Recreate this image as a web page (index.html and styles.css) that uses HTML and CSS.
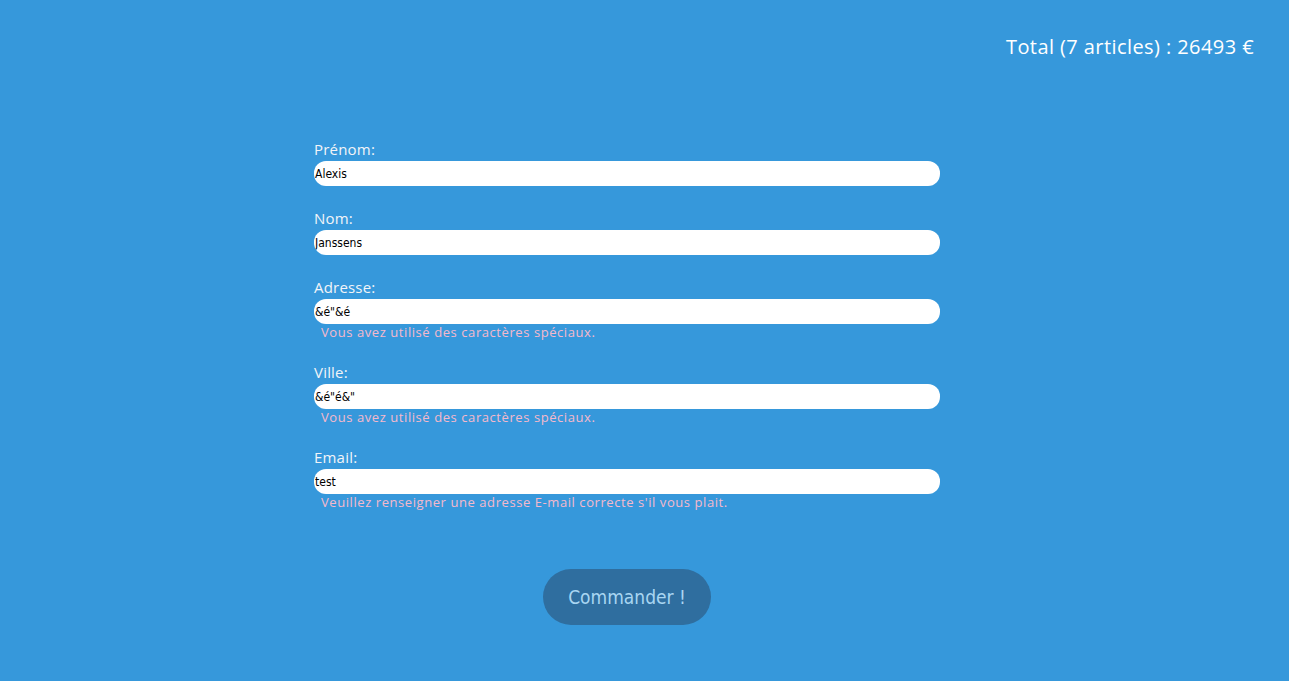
FILE: index.html
```html
<!DOCTYPE html>
<html lang="fr">
<head>
<meta charset="utf-8">
<title>Commande</title>
<link rel="stylesheet" href="styles.css">
</head>
<body>
<header class="topbar">
  <p class="total">Total (7 articles) : 26493 €</p>
</header>
<main class="page">
  <form class="order-form">
    <div class="field">
      <label class="label" for="prenom">Prénom:</label>
      <input class="input" id="prenom" type="text" value="Alexis">
    </div>
    <div class="field">
      <label class="label" for="nom">Nom:</label>
      <input class="input" id="nom" type="text" value="Janssens">
    </div>
    <div class="field">
      <label class="label" for="adresse">Adresse:</label>
      <input class="input" id="adresse" type="text" value="&amp;é&quot;&amp;é">
      <p class="error">Vous avez utilisé des caractères spéciaux.</p>
    </div>
    <div class="field">
      <label class="label" for="ville">Ville:</label>
      <input class="input" id="ville" type="text" value="&amp;é&quot;é&amp;&quot;">
      <p class="error">Vous avez utilisé des caractères spéciaux.</p>
    </div>
    <div class="field">
      <label class="label" for="email">Email:</label>
      <input class="input" id="email" type="text" value="test">
      <p class="error">Veuillez renseigner une adresse E-mail correcte s'il vous plait.</p>
    </div>
    <div class="actions">
      <button class="submit" type="button">Commander !</button>
    </div>
  </form>
</main>
</body>
</html>
```

FILE: styles.css
```css
html, body {
  margin: 0;
  padding: 0;
}
body {
  background: #3698db;
  min-height: 681px;
  font-family: "Open Sans", "Noto Sans", sans-serif;
  color: #ffffff;
}
.topbar {
  display: flex;
  justify-content: flex-end;
  padding: 34px 35px 0 0;
}
.total {
  margin: 0;
  font-size: 20px;
  line-height: 26px;
  color: #ffffff;
  letter-spacing: 0.42px;
}
.page {
  padding: 79px 0 0 314px;
}
.order-form {
  width: 626px;
  display: flex;
  flex-direction: column;
  gap: 22px;
}
.field {
  display: flex;
  flex-direction: column;
}
.label {
  display: block;
  font-size: 15px;
  line-height: 20px;
  color: #f2f4f8;
  margin-bottom: 2px;
  letter-spacing: 0.2px;
}
.input {
  box-sizing: border-box;
  width: 626px;
  height: 25px;
  border: none;
  border-radius: 12px;
  background: #ffffff;
  padding: 0 1px;
  font-family: "DejaVu Sans Condensed", "DejaVu Sans", sans-serif;
  font-size: 12px;
  color: #000000;
  outline: none;
}
.error {
  margin: 0;
  padding-left: 7px;
  font-size: 13px;
  line-height: 16px;
  color: #f5b8cb;
  letter-spacing: 0.57px;
}
.actions {
  display: flex;
  justify-content: center;
  padding-top: 37px;
}
.submit {
  width: 168px;
  height: 56px;
  border: none;
  border-radius: 28px;
  background: #2f6e9f;
  color: #a9d6f2;
  font-family: "DejaVu Sans Condensed", "DejaVu Sans", sans-serif;
  font-size: 19px;
  cursor: pointer;
}
```
